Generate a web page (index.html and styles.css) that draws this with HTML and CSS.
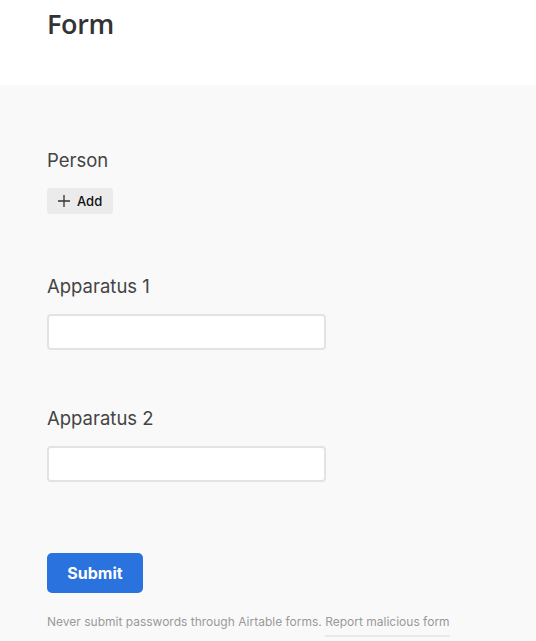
FILE: index.html
```html
<!DOCTYPE html>
<html>
<head>
<meta charset="utf-8">
<link rel="stylesheet" href="styles.css">
</head>
<body>
<header class="header">
  <h1 class="title">Form</h1>
</header>
<main class="main">
  <section class="field field-person">
    <div class="label">Person</div>
    <button class="add-btn">
      <svg class="plus" width="14" height="14" viewBox="0 0 14 14"><path d="M7 1v12M1 7h12" stroke="#333" stroke-width="1.3" fill="none"/></svg>
      <span>Add</span>
    </button>
  </section>
  <section class="field field-a1">
    <div class="label">Apparatus 1</div>
    <div class="input"></div>
  </section>
  <section class="field field-a2">
    <div class="label">Apparatus 2</div>
    <div class="input"></div>
  </section>
  <button class="submit">Submit</button>
  <p class="footer">Never submit passwords through Airtable forms. <span class="report">Report malicious form</span></p>
</main>
</body>
</html>
```
FILE: styles.css
```css
html, body {
  margin: 0;
  padding: 0;
  height: 100%;
  background: #f9f9f9;
  font-family: Inter, "Liberation Sans", sans-serif;
}
.header {
  background: #ffffff;
  height: 85px;
  box-sizing: border-box;
  padding: 6px 47px 0;
}
.title {
  margin: 0;
  font-family: "Open Sans", sans-serif;
  font-size: 27px;
  font-weight: 600;
  line-height: 36px;
  color: #333;
  letter-spacing: -0.3px;
}
.main {
  background: #f9f9f9;
  padding: 63px 47px 0;
  display: flex;
  flex-direction: column;
  align-items: flex-start;
}
.field {
  display: flex;
  flex-direction: column;
  align-items: flex-start;
}
.label {
  font-size: 18.5px;
  line-height: 24px;
  color: #444;
}
.add-btn {
  margin-top: 16px;
  height: 26px;
  width: 66px;
  border: none;
  border-radius: 3px;
  background: #ebebeb;
  display: flex;
  align-items: center;
  gap: 6px;
  padding: 0 0 0 10px;
  font-family: Inter, sans-serif;
  font-size: 13px;
  font-weight: 500;
  color: #111;
}
.field-a1 { margin-top: 60px; }
.field-a2 { margin-top: 56px; }
.input {
  margin-top: 16px;
  width: 279px;
  height: 36px;
  box-sizing: border-box;
  border: 2px solid #e3e3e3;
  border-radius: 4px;
  background: #fff;
}
.submit {
  margin-top: 71px;
  width: 96px;
  height: 40px;
  border: none;
  border-radius: 5px;
  background: #2a72de;
  color: #fff;
  font-family: Inter, sans-serif;
  font-size: 16px;
  font-weight: 700;
}
.footer {
  margin: 21px 0 0;
  font-size: 12px;
  line-height: 16px;
  color: #999;
}
.report {
  display: inline-block;
  padding-bottom: 5px;
  border-bottom: 2px solid #e9e9e9;
}
```
